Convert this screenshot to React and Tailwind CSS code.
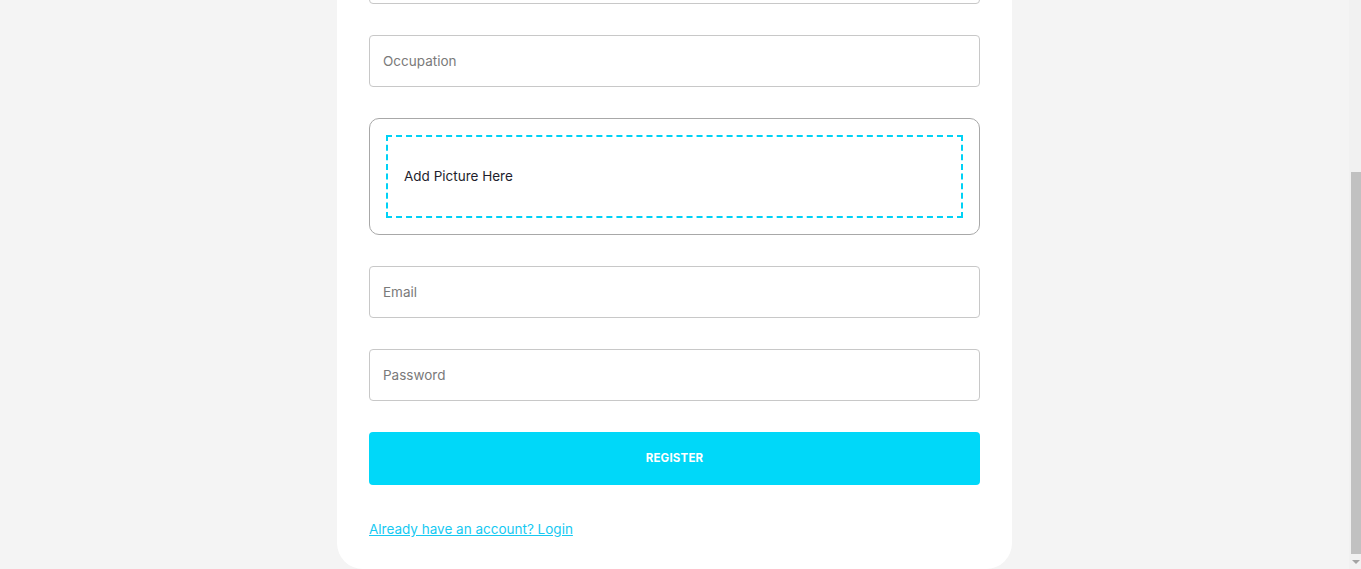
import React, { useLayoutEffect, useRef } from "react";

function Field({ placeholder, type = "text" }) {
  return (
    <input
      type={type}
      placeholder={placeholder}
      className="w-full h-[52px] rounded-[4px] border border-[#c8c8c8] bg-white px-[13px] text-[13.5px] text-[#333] placeholder:text-[#7a7a7a] outline-none"
    />
  );
}

export default function App() {
  const scroller = useRef(null);

  useLayoutEffect(() => {
    const el = scroller.current;
    if (el) el.scrollTop = el.scrollHeight;
  }, []);

  return (
    <div className="flex h-screen bg-[#f4f4f4]" style={{ fontFamily: "Inter, 'Open Sans', sans-serif" }}>
      <div ref={scroller} className="flex-1 overflow-y-scroll [scrollbar-width:none]">
        <div className="flex justify-center pt-[20px]">
          <div className="w-[675px] bg-white rounded-[26px] px-[32px] pt-[40px] pb-[29px]">
            <h1 className="text-[28px] font-semibold text-[#1a1a2e] mb-[30px]">Create Account</h1>
            <div className="flex flex-col gap-[31px]">
              <Field placeholder="Full Name" />
              <Field placeholder="Username" />
              <Field placeholder="Occupation" />
              <label className="block rounded-[10px] border border-[#a8a8a8] p-[16px] cursor-pointer">
                <div className="h-[83px] border-2 border-dashed border-[#00d2f5] flex items-center px-[16px]">
                  <span className="text-[13.5px] text-[#1e1e2d]">Add Picture Here</span>
                </div>
                <input type="file" className="hidden" />
              </label>
              <Field placeholder="Email" type="email" />
              <Field placeholder="Password" type="password" />
            </div>
            <button className="mt-[31px] w-full h-[53px] rounded-[4px] bg-[#00d8f9] text-white text-[11.5px] font-bold tracking-[0.2px]">
              REGISTER
            </button>
            <div className="mt-[31px]">
              <a href="#" className="text-[13.5px] text-[#16c9f2] underline">
                Already have an account? Login
              </a>
            </div>
          </div>
        </div>
      </div>
      {/* scrollbar */}
      <div className="w-[12px] flex flex-col bg-[#f1f1f1]">
        <div className="h-[172px] shrink-0" />
        <div className="flex-1 ml-[2px] bg-[#c1c1c1]" />
        <div className="h-[15px] shrink-0 flex items-center justify-center pl-[2px]">
          <div className="w-0 h-0 border-l-[4px] border-r-[4px] border-t-[4px] border-l-transparent border-r-transparent border-t-[#a3a3a3]" />
        </div>
      </div>
    </div>
  );
}
